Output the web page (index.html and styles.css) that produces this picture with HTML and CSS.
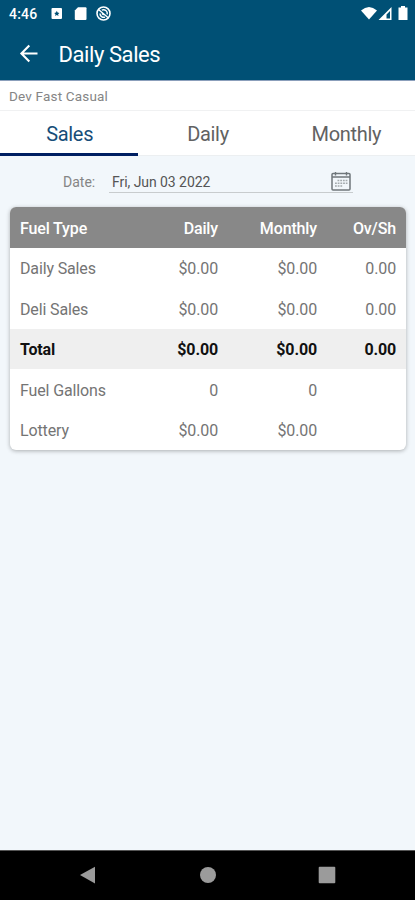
FILE: index.html
```html
<!DOCTYPE html>
<html lang="en">
<head>
<meta charset="utf-8">
<title>Daily Sales</title>
<link rel="stylesheet" href="styles.css">
</head>
<body>
<header class="top">
  <div class="status">
    <span class="clock">4:46</span>
    <svg class="notices" width="62" height="18" viewBox="0 0 62 18">
      <path fill="#fff" fill-rule="evenodd" d="M2.500 3h8.500a1 1 0 0 1 1 1v9a1 1 0 0 1-1 1H2.500a1 1 0 0 1-1-1V4a1 1 0 0 1 1-1zM6.800 5.800L6 7.600l-1.800.4 1.300 1.200-.4 1.800 1.700-.9 1.700.9-.4-1.800L9.400 8l-1.800-.4z"/>
      <path fill="#fff" d="M28 2.200h7.500a1 1 0 0 1 1 1V14a1 1 0 0 1-1 1H25.800a1 1 0 0 1-1-1V5.400z"/>
      <g fill="none" stroke="#fff"><circle cx="53.500" cy="8.500" r="6.500" stroke-width="1.600"/><path stroke-width="1.500" d="M48.500 4.500l10 8.500M50 8.500a3.800 3.800 0 0 0 5 3.600M51.800 5.100a3.800 3.800 0 0 1 5.400 4.200M52 8.400l1.700 1.600"/></g>
    </svg>
    <svg class="signals" width="48" height="18" viewBox="0 0 48 18">
      <path fill="#fff" d="M0 5.500Q8-1.500 16 5.500L8 14.500z"/>
      <path fill="#fff" fill-rule="evenodd" d="M17.500 15L30.500 2v13zM25.500 9.500V13.500H29V6z"/>
      <path fill="#fff" d="M40 1h4v1.500h2.500V15h-9V2.500H40z"/>
    </svg>
  </div>
  <div class="bar">
    <svg width="20" height="20" viewBox="0 0 20 20" fill="none" stroke="#fff" stroke-width="2.100"><path d="M18.500 9.500H2.500M10.300 1.500L2.400 9.500l7.900 8"/></svg>
    <h1>Daily Sales</h1>
  </div>
</header>
<div class="store"><span>Dev Fast Casual</span></div>
<nav class="tabs">
  <div class="tab active"><span>Sales</span></div>
  <div class="tab"><span>Daily</span></div>
  <div class="tab"><span>Monthly</span></div>
</nav>
<main>
  <div class="date">
    <span class="label">Date:</span>
    <div class="field">
      <span>Fri, Jun 03 2022</span>
      <svg width="20" height="20" viewBox="0 0 20 20" fill="none" stroke="#70777b"><rect x="1" y="2.500" width="18" height="16.500" rx="1" stroke-width="1.500"/><path stroke-width="1.400" d="M1 6h18M4.500 1v3.500M15.500 1v3.500"/><path stroke-width="1.500" stroke-dasharray="1.800 .9" stroke="#a4aaad" d="M6.500 9.500h10M4 12.200h12.500M4 14.900h8"/></svg>
    </div>
  </div>
  <table>
    <thead><tr><th>Fuel Type</th><th>Daily</th><th>Monthly</th><th>Ov/Sh</th></tr></thead>
    <tbody>
      <tr><td>Daily Sales</td><td>$0.00</td><td>$0.00</td><td>0.00</td></tr>
      <tr><td>Deli Sales</td><td>$0.00</td><td>$0.00</td><td>0.00</td></tr>
      <tr class="total"><td>Total</td><td>$0.00</td><td>$0.00</td><td>0.00</td></tr>
      <tr><td>Fuel Gallons</td><td>0</td><td>0</td><td></td></tr>
      <tr><td>Lottery</td><td>$0.00</td><td>$0.00</td><td></td></tr>
    </tbody>
  </table>
</main>
<footer>
  <svg width="18" height="18" viewBox="0 0 18 18"><path fill="#9b9b9b" d="M1 9L16 .8v16.700z"/></svg>
  <svg width="18" height="18" viewBox="0 0 18 18"><circle cx="9" cy="9" r="8" fill="#9b9b9b"/></svg>
  <svg width="18" height="18" viewBox="0 0 18 18"><rect x=".7" y=".7" width="16.600" height="16.600" rx="1" fill="#9b9b9b"/></svg>
</footer>
</body>
</html>
```
FILE: styles.css
```css
* { box-sizing: border-box; }
body {
  margin: 0;
  height: 900px;
  display: flex;
  flex-direction: column;
  background: #f2f7fb;
  font-family: Roboto, sans-serif;
  color: #747474;
  overflow: hidden;
}
svg { display: block; flex: none; }
.top { height: 81px; background: #005075; color: #fff; border-bottom: 1px solid #8b9fbb; }
.status { display: flex; height: 28px; padding: 5px 7px 0 9px; }
.clock { font-size: 14px; line-height: 18px; width: 41px; font-weight: 500; letter-spacing: .2px; }
.signals { margin-left: auto; margin-right: -1px; }
.bar { display: flex; align-items: center; height: 52px; padding-left: 19px; gap: 19.5px; }
h1 { margin: 0; font-size: 22px; font-weight: 400; line-height: 28px; letter-spacing: -.42px; padding-top: 2px; }
.store { height: 30px; padding-left: 9px; background: #fff; border-bottom: 1px solid #f0f1f2; font-size: 13.5px; line-height: 31px; letter-spacing: .18px; color: #858585; }
.tabs { display: grid; grid-template-columns: repeat(3, 1fr); height: 45px; background: #fff; border-bottom: 1px solid #eceff1; }
.tab { text-align: center; font-size: 20px; line-height: 47px; height: 44px; color: #626262; letter-spacing: -.3px; padding-left: 1px; }
.active { color: #174d79; border-bottom: 3px solid #001f62; height: 45px; }
main { flex: 1; }
.date { display: flex; height: 37px; padding: 0 62px 0 63px; font-size: 14px; line-height: 52px; }
.label { width: 46px; color: #858585; letter-spacing: 0; }
.field { flex: 1; display: flex; justify-content: space-between; padding: 0 2px 0 3px; color: #555; border-bottom: 1px solid #c8ccce; }
.field span { letter-spacing: -.06px; }
.field svg { margin-top: 15px; }
table {
  width: 396px;
  margin: 14px 0 0 10px;
  table-layout: fixed;
  border-collapse: separate;
  border-spacing: 0;
  border-radius: 6px;
  overflow: hidden;
  background: #fff;
  box-shadow: 0 1px 4px rgba(0, 0, 0, .3);
  font-size: 16px;
  letter-spacing: -.14px;
}
th, td { padding: 3px 0 0; text-align: right; height: 40.5px; font-weight: 400; line-height: 20px; }
th { background: #888; color: #fff; font-weight: 500; }
th:first-child, td:first-child { width: 109px; padding-left: 10px; text-align: left; }
th:nth-child(2) { width: 99px; }
th:nth-child(3) { width: 99px; }
th:last-child, td:last-child { padding-right: 10px; }
.total td { background: #efefef; color: #111; font-weight: 700; }
footer { height: 50px; background: #000; border-top: 1px solid #555; display: flex; justify-content: space-between; align-items: center; padding: 0 79px 2px; }
```
